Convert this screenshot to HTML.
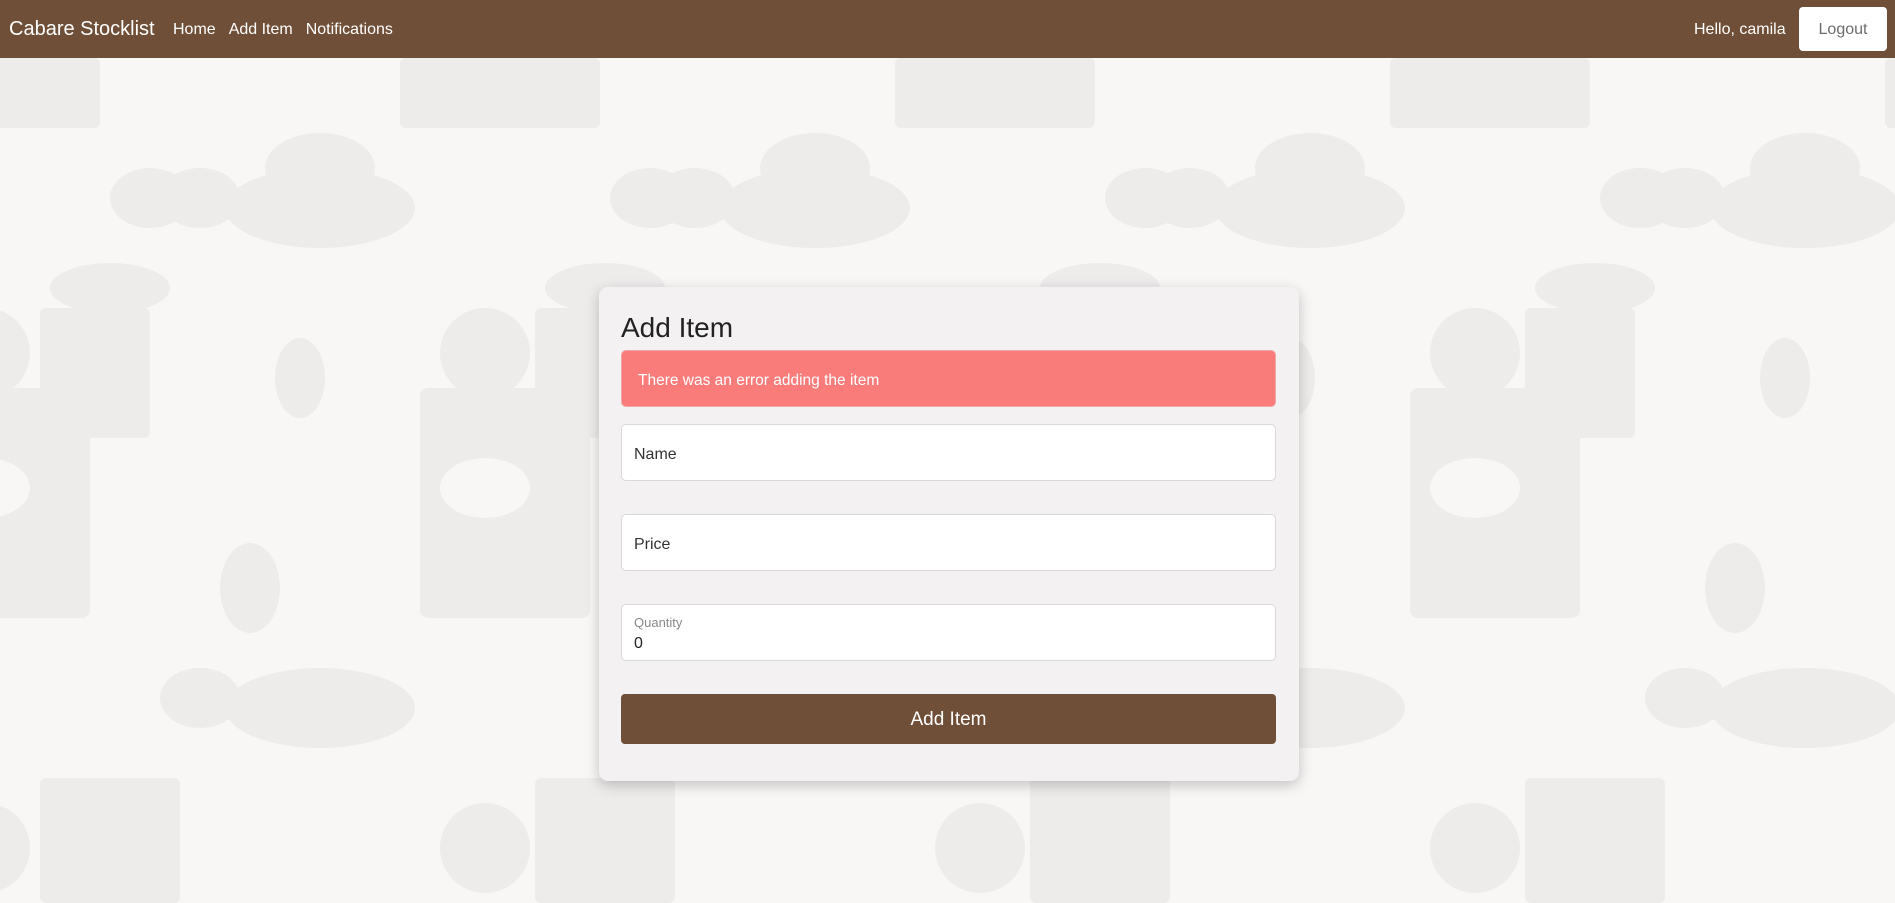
<!DOCTYPE html>
<html><head><meta charset="utf-8"><style>
*{box-sizing:border-box;margin:0;padding:0}
body{width:1895px;height:903px;overflow:hidden;font-family:"Liberation Sans",sans-serif;background:#f8f7f6;position:relative}
.bg{position:absolute;left:0;top:58px;width:1895px;height:845px}
nav{position:absolute;left:0;top:0;width:1895px;height:58px;background:#6f4f38;color:#fff}
.brand{position:absolute;left:9px;top:18px;font-size:20px}
.links{position:absolute;left:173px;top:21px;font-size:16px}
.links span{margin-right:13px}
.hello{position:absolute;left:1694px;top:21px;font-size:16px}
.logout{position:absolute;left:1799px;top:7px;width:88px;height:44px;background:#fff;border-radius:4px;color:#6c6c6c;font-size:16px;text-align:center;line-height:46px}
.card{position:absolute;left:599px;top:287px;width:700px;height:494px;background:#f3f1f2;border-radius:9px;box-shadow:0 4px 14px rgba(0,0,0,.22)}
h1{position:absolute;left:22px;top:25px;font-size:28px;font-weight:normal;color:#222}
.alert{position:absolute;left:22px;top:63px;width:655px;height:57px;background:#f97b7a;border:1px solid #f1a6a6;border-radius:5px;color:#fff;font-size:15.5px;padding:21px 16px}
.inp{position:absolute;left:22px;width:655px;height:57px;background:#fff;border:1px solid #d9d9dd;border-radius:5px;color:#333;font-size:16px;padding:21px 12px}
.small{font-size:13px;color:#888;position:absolute;left:12px;top:10px}
.val{position:absolute;left:12px;top:30px;font-size:16px;color:#222}
.btn{position:absolute;left:22px;top:407px;width:655px;height:50px;background:#6f4f38;border-radius:4px;color:#fff;font-size:19px;text-align:center;line-height:52px}
</style></head><body>
<svg class="bg" viewBox="0 0 1895 845" fill="#edeceb">
<g id="t">
<ellipse cx="320" cy="150" rx="95" ry="40"/><ellipse cx="320" cy="110" rx="55" ry="35"/>
<rect x="400" y="0" width="200" height="70" rx="6"/><rect x="420" y="330" width="170" height="230" rx="8"/>
<ellipse cx="485" cy="430" rx="45" ry="30" fill="#f8f7f6"/><circle cx="485" cy="295" r="45"/>
<rect x="40" y="250" width="110" height="130" rx="6"/><ellipse cx="110" cy="230" rx="60" ry="25"/>
<ellipse cx="200" cy="140" rx="40" ry="30"/><ellipse cx="250" cy="530" rx="30" ry="45"/>
<ellipse cx="650" cy="140" rx="40" ry="30"/><ellipse cx="300" cy="320" rx="25" ry="40"/>
<rect x="40" y="720" width="140" height="125" rx="6"/><ellipse cx="320" cy="650" rx="95" ry="40"/>
<circle cx="485" cy="790" r="45"/><ellipse cx="200" cy="640" rx="40" ry="30"/>
</g>
<use href="#t" x="-500"/><use href="#t" x="495"/><use href="#t" x="990"/><use href="#t" x="1485"/>
</svg>
<nav><div class="brand">Cabare Stocklist</div>
<div class="links"><span>Home</span><span>Add Item</span><span>Notifications</span></div>
<div class="hello">Hello, camila</div><div class="logout">Logout</div></nav>
<div class="card">
<h1>Add Item</h1>
<div class="alert">There was an error adding the item</div>
<div class="inp" style="top:137px">Name</div>
<div class="inp" style="top:227px">Price</div>
<div class="inp" style="top:317px"><span class="small">Quantity</span><span class="val">0</span></div>
<div class="btn">Add Item</div>
</div>
</body></html>
